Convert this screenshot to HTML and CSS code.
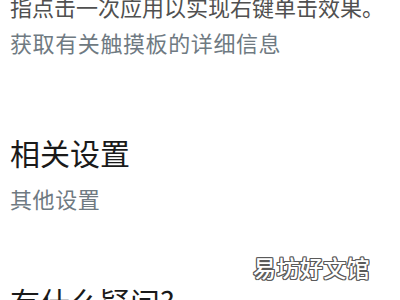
FILE: index.html
```html
<!DOCTYPE html>
<html lang="zh-CN">
<head>
<meta charset="utf-8">
<link rel="stylesheet" href="styles.css">
</head>
<body>
<main class="page">
  <p class="desc">指点击一次应用以实现右键单击效果。</p>
  <a class="link" href="#">获取有关触摸板的详细信息</a>
  <h2 class="heading related">相关设置</h2>
  <a class="link other" href="#">其他设置</a>
  <h2 class="heading question">有什么疑问?</h2>
</main>
<div class="watermark">易坊好文馆</div>
</body>
</html>
```
FILE: styles.css
```css
html, body {
  margin: 0;
  padding: 0;
  background: #ffffff;
  overflow: hidden;
}
body {
  width: 400px;
  height: 300px;
  position: relative;
  font-family: "Noto Sans CJK SC", "Noto Sans", sans-serif;
}
.page {
  display: flex;
  flex-direction: column;
  align-items: flex-start;
  padding-left: 10px;
  margin-top: -12px;
}
.desc {
  margin: 0;
  font-size: 22px;
  line-height: 36px;
  color: #505050;
  white-space: nowrap;
}
.link {
  font-size: 22px;
  line-height: 36px;
  letter-spacing: 0.6px;
  color: #6f7a82;
  text-decoration: none;
  white-space: nowrap;
}
.heading {
  margin: 0;
  font-size: 30px;
  font-weight: 400;
  line-height: 40px;
  color: #1a1a1a;
  white-space: nowrap;
}
.related {
  margin-top: 72px;
}
.other {
  margin-top: 8px;
}
.question {
  margin-top: 65px;
}
.watermark {
  position: absolute;
  left: 253px;
  top: 250px;
  font-size: 23px;
  line-height: 34px;
  font-weight: 500;
  color: #ffffff;
  letter-spacing: 0.4px;
  text-shadow:
    1px 0 0 #5a5a5a, -1px 0 0 #5a5a5a,
    0 1px 0 #5a5a5a, 0 -1px 0 #5a5a5a,
    1px 1px 0 #5a5a5a, -1px -1px 0 #5a5a5a,
    1px -1px 0 #5a5a5a, -1px 1px 0 #5a5a5a;
}
```
